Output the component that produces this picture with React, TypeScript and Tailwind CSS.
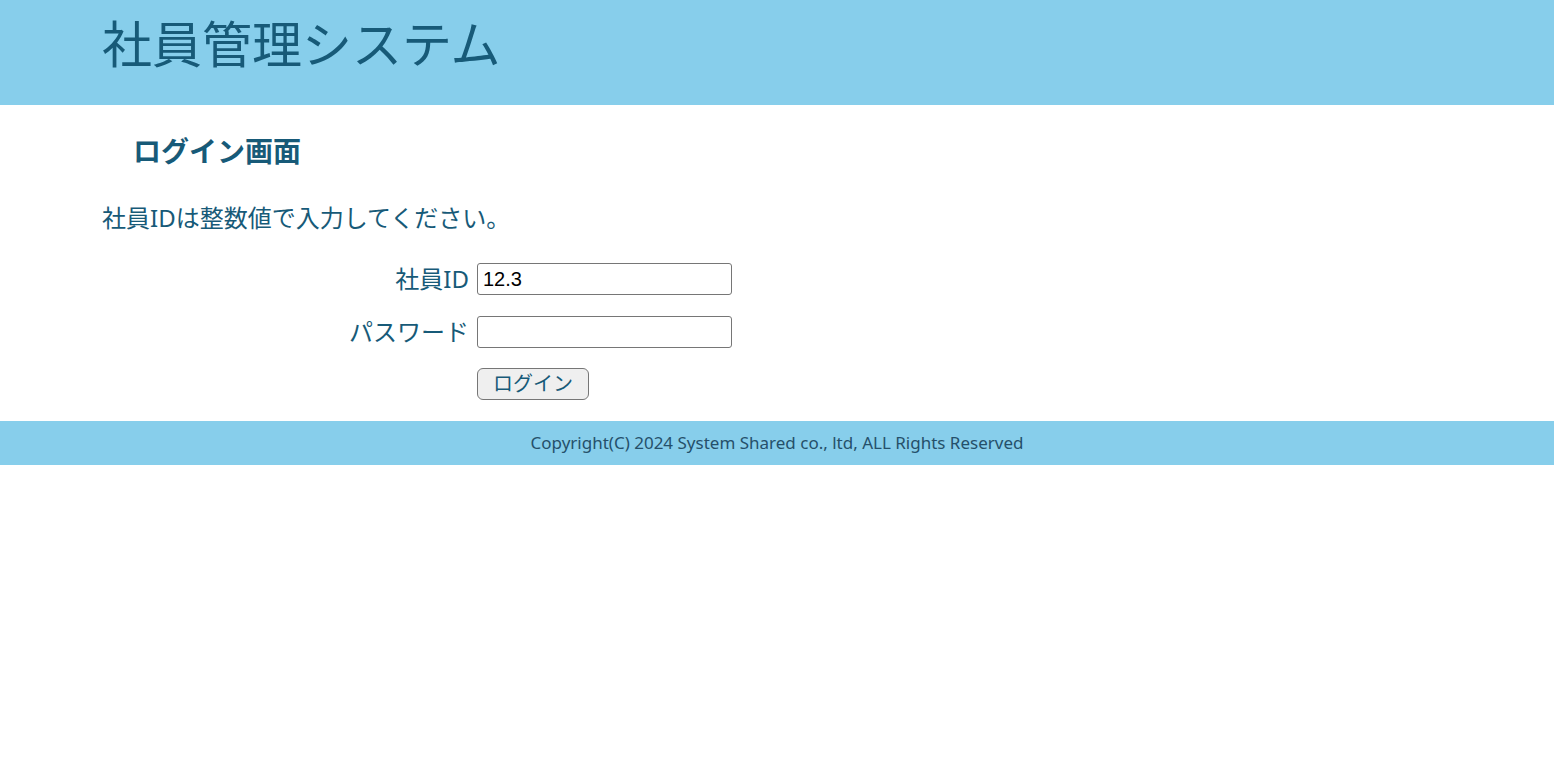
import React from "react";

export default function App() {
  const jp = { fontFamily: '"Noto Sans", "Noto Sans CJK JP", sans-serif' };
  return (
    <div className="min-h-screen bg-white text-[#175a78]" style={jp}>
      <header className="h-[105px] bg-[#87ceeb]">
        <h1 className="pl-[102px] pt-[19px] text-[50px] leading-[50px] font-normal">社員管理システム</h1>
      </header>
      <main className="pl-[102px]">
        <h2 className="pl-[31px] pt-[32px] text-[28px] leading-[28px] font-bold">ログイン画面</h2>
        <p className="mt-[41px] text-[24px] leading-[24px]">社員IDは整数値で入力してください。</p>
        <form className="mt-[33px] grid grid-cols-[367px_255px] gap-x-2 gap-y-[21px] items-center" onSubmit={(e) => e.preventDefault()}>
          <label className="text-right text-[24px] leading-[32px]">社員ID</label>
          <input
            defaultValue="12.3"
            className="h-[32px] w-[255px] rounded-[3px] border border-[#767676] px-[5px] text-[20px] text-black outline-none"
            style={{ fontFamily: '"Liberation Sans", Arial, sans-serif' }}
          />
          <label className="text-right text-[24px] leading-[32px]">パスワード</label>
          <input
            type="password"
            className="h-[32px] w-[255px] rounded-[3px] border border-[#767676] px-[5px] text-[20px] text-black outline-none"
          />
          <div />
          <div className="-mt-px">
            <button
              type="submit"
              className="h-[32px] w-[112px] rounded-[6px] border border-[#767676] bg-[#efefef] text-[20px] leading-[30px] text-[#175a78]"
            >
              ログイン
            </button>
          </div>
        </form>
      </main>
      <footer className="mt-[21px] flex h-[44px] items-center justify-center bg-[#87ceeb] text-[17px] text-[#25506a]">
        Copyright(C) 2024 System Shared co., ltd, ALL Rights Reserved
      </footer>
    </div>
  );
}
